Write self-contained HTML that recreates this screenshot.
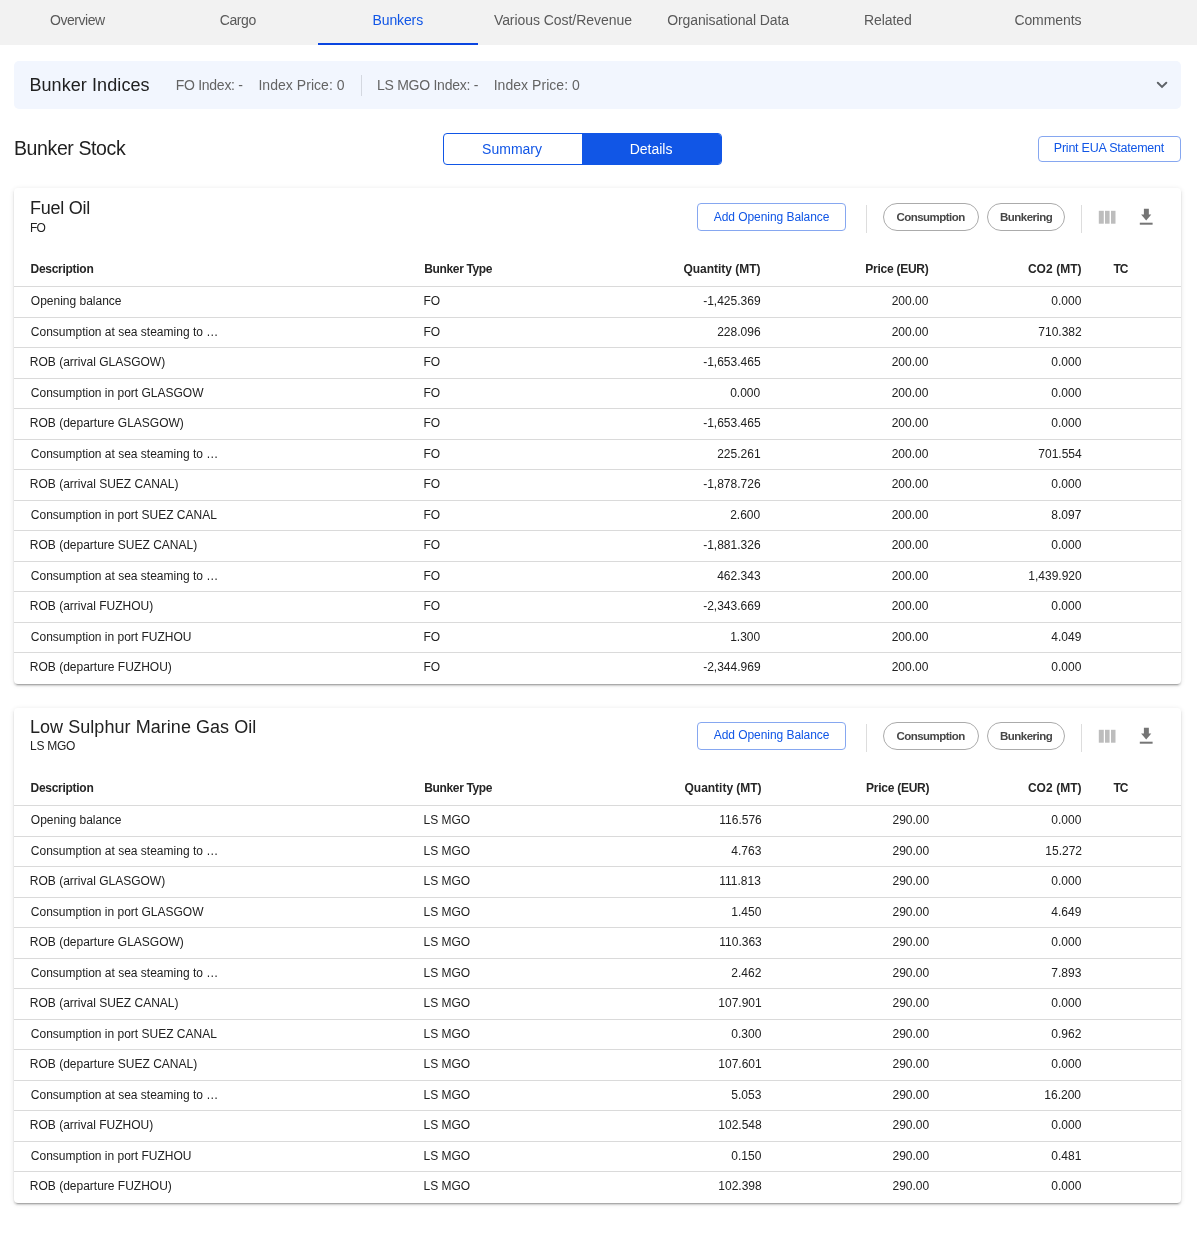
<!DOCTYPE html>
<html><head><meta charset="utf-8"><title>Bunkers</title>
<style>
html,body{margin:0;padding:0;}
body{width:1197px;height:1241px;position:relative;overflow:hidden;background:#fff;font-family:"Liberation Sans", sans-serif;}
</style></head><body><div style="position:absolute;left:0;top:0;width:1197px;height:1241px;will-change:transform;">
<div style="position:absolute;left:0px;top:0px;width:1197px;height:45px;background:#f2f2f2;"></div><div style="position:absolute;left:50.00px;top:10px;font-size:14px;line-height:20px;font-weight:400;color:#595959;white-space:nowrap;letter-spacing:-0.457px;">Overview</div><div style="position:absolute;left:219.80px;top:10px;font-size:14px;line-height:20px;font-weight:400;color:#595959;white-space:nowrap;letter-spacing:-0.425px;">Cargo</div><div style="position:absolute;left:372.50px;top:10px;font-size:14px;line-height:20px;font-weight:400;color:#1156e6;white-space:nowrap;letter-spacing:-0.117px;">Bunkers</div><div style="position:absolute;left:493.90px;top:10px;font-size:14px;line-height:20px;font-weight:400;color:#595959;white-space:nowrap;letter-spacing:-0.053px;">Various Cost/Revenue</div><div style="position:absolute;left:667.20px;top:10px;font-size:14px;line-height:20px;font-weight:400;color:#595959;white-space:nowrap;letter-spacing:-0.100px;">Organisational Data</div><div style="position:absolute;left:864.00px;top:10px;font-size:14px;line-height:20px;font-weight:400;color:#595959;white-space:nowrap;letter-spacing:-0.067px;">Related</div><div style="position:absolute;left:1014.40px;top:10px;font-size:14px;line-height:20px;font-weight:400;color:#595959;white-space:nowrap;letter-spacing:-0.086px;">Comments</div><div style="position:absolute;left:318px;top:43px;width:160px;height:2px;background:#0a45e0;"></div><div style="position:absolute;left:14px;top:61px;width:1167px;height:48px;background:#f2f6fe;border-radius:5px;"></div><div style="position:absolute;left:29.40px;top:73px;font-size:18px;line-height:24px;font-weight:400;color:#212121;white-space:nowrap;letter-spacing:0.085px;">Bunker Indices</div><div style="position:absolute;left:175.70px;top:75px;font-size:14px;line-height:20px;font-weight:400;color:#646464;white-space:nowrap;letter-spacing:-0.270px;">FO Index: -</div><div style="position:absolute;left:258.40px;top:75px;font-size:14px;line-height:20px;font-weight:400;color:#646464;white-space:nowrap;letter-spacing:0.046px;">Index Price: 0</div><div style="position:absolute;left:361px;top:75px;width:1px;height:21px;background:#d4d8e0;"></div><div style="position:absolute;left:377.00px;top:75px;font-size:14px;line-height:20px;font-weight:400;color:#646464;white-space:nowrap;letter-spacing:-0.264px;">LS MGO Index: -</div><div style="position:absolute;left:493.70px;top:75px;font-size:14px;line-height:20px;font-weight:400;color:#646464;white-space:nowrap;letter-spacing:0.038px;">Index Price: 0</div><svg style="position:absolute;left:1150px;top:75px" width="24" height="20" viewBox="0 0 24 20"><path d="M7.8 7.8L12 11.9L16.3 7.8" fill="none" stroke="#5f6368" stroke-width="2" stroke-linecap="round"/></svg><div style="position:absolute;left:14.00px;top:135px;font-size:19.5px;line-height:26px;font-weight:400;color:#212121;white-space:nowrap;letter-spacing:-0.391px;">Bunker Stock</div><div style="position:absolute;left:443px;top:133px;width:277px;height:30px;border:1px solid #1156e6;border-radius:4px;overflow:hidden;background:#fff;"><div style="position:absolute;left:138px;top:0;width:139px;height:30px;background:#1156e6;"></div></div><div style="position:absolute;left:482.10px;top:139px;font-size:14px;line-height:20px;font-weight:400;color:#1156e6;white-space:nowrap;">Summary</div><div style="position:absolute;left:629.70px;top:139px;font-size:14px;line-height:20px;font-weight:400;color:#ffffff;white-space:nowrap;">Details</div><div style="position:absolute;left:1038px;top:136px;width:141px;height:24px;border:1px solid #86a7f0;border-radius:4px;"></div><div style="position:absolute;left:1053.80px;top:139px;font-size:12.5px;line-height:18px;font-weight:400;color:#1156e6;white-space:nowrap;letter-spacing:-0.233px;">Print EUA Statement</div><div style="position:absolute;left:14px;top:188px;width:1167px;height:496px;background:#fff;border-radius:4px;box-shadow:0px 3px 1px -2px rgba(0,0,0,0.2),0px 2px 2px 0px rgba(0,0,0,0.14),0px 1px 5px 0px rgba(0,0,0,0.12);"></div><div style="position:absolute;left:30.00px;top:196px;font-size:18px;line-height:24px;font-weight:400;color:#212121;white-space:nowrap;letter-spacing:-0.243px;">Fuel Oil</div><div style="position:absolute;left:30.00px;top:219px;font-size:12px;line-height:18px;font-weight:400;color:#212121;white-space:nowrap;letter-spacing:-0.900px;">FO</div><div style="position:absolute;left:697px;top:203px;width:147px;height:26px;border:1px solid #86a7f0;border-radius:4px;"></div><div style="position:absolute;left:713.80px;top:208px;font-size:12px;line-height:18px;font-weight:400;color:#1156e6;white-space:nowrap;letter-spacing:-0.061px;">Add Opening Balance</div><div style="position:absolute;left:866px;top:205px;width:1px;height:28px;background:#dddddd;"></div><div style="position:absolute;left:883px;top:203px;width:94px;height:26px;border:1px solid #ababab;border-radius:14px;"></div><div style="position:absolute;left:896.40px;top:209px;font-size:11.5px;line-height:16px;font-weight:700;color:#474747;white-space:nowrap;letter-spacing:-0.520px;">Consumption</div><div style="position:absolute;left:987px;top:203px;width:76px;height:26px;border:1px solid #ababab;border-radius:14px;"></div><div style="position:absolute;left:1000.00px;top:209px;font-size:11.5px;line-height:16px;font-weight:700;color:#474747;white-space:nowrap;letter-spacing:-0.525px;">Bunkering</div><div style="position:absolute;left:1081px;top:205px;width:1px;height:28px;background:#dddddd;"></div><svg style="position:absolute;left:1092px;top:202px" width="32" height="32" viewBox="0 0 32 32"><rect x="6.8" y="8.8" width="5" height="12.9" fill="#bdbdbd"/><rect x="13" y="8.8" width="4.6" height="12.9" fill="#bdbdbd"/><rect x="19" y="8.8" width="4.5" height="12.9" fill="#bdbdbd"/></svg><svg style="position:absolute;left:1130px;top:200px" width="32" height="32" viewBox="0 0 32 32"><path d="M13.9 8.8h4.95v5.6h2.45l-5.1 6.2-5.1-6.2h2.8z" fill="#757575"/><rect x="9.8" y="22.7" width="12.8" height="2" fill="#757575"/></svg><div style="position:absolute;left:30.50px;top:260px;font-size:12px;line-height:18px;font-weight:700;color:#262626;white-space:nowrap;letter-spacing:-0.280px;">Description</div><div style="position:absolute;left:424.30px;top:260px;font-size:12px;line-height:18px;font-weight:700;color:#262626;white-space:nowrap;letter-spacing:-0.360px;">Bunker Type</div><div style="position:absolute;left:683.40px;top:260px;font-size:12px;line-height:18px;font-weight:700;color:#262626;white-space:nowrap;letter-spacing:-0.017px;">Quantity (MT)</div><div style="position:absolute;left:865.30px;top:260px;font-size:12px;line-height:18px;font-weight:700;color:#262626;white-space:nowrap;letter-spacing:-0.260px;">Price (EUR)</div><div style="position:absolute;left:1027.90px;top:260px;font-size:12px;line-height:18px;font-weight:700;color:#262626;white-space:nowrap;letter-spacing:0.057px;">CO2 (MT)</div><div style="position:absolute;left:1113.40px;top:260px;font-size:12px;line-height:18px;font-weight:700;color:#262626;white-space:nowrap;letter-spacing:-1.000px;">TC</div><div style="position:absolute;left:14px;top:286px;width:1167px;height:1px;background:#dadada;"></div><div style="position:absolute;left:30.80px;top:292px;font-size:12px;line-height:18px;font-weight:400;color:#212121;white-space:nowrap;">Opening balance</div><div style="position:absolute;left:423.50px;top:292px;font-size:12px;line-height:18px;font-weight:400;color:#212121;white-space:nowrap;">FO</div><div style="position:absolute;left:703.20px;top:292px;font-size:12px;line-height:18px;font-weight:400;color:#212121;white-space:nowrap;">-1,425.369</div><div style="position:absolute;left:891.70px;top:292px;font-size:12px;line-height:18px;font-weight:400;color:#212121;white-space:nowrap;">200.00</div><div style="position:absolute;left:1051.30px;top:292px;font-size:12px;line-height:18px;font-weight:400;color:#212121;white-space:nowrap;">0.000</div><div style="position:absolute;left:14px;top:317px;width:1167px;height:1px;background:#dadada;"></div><div style="position:absolute;left:30.80px;top:323px;font-size:12px;line-height:18px;font-weight:400;color:#212121;white-space:nowrap;">Consumption at sea steaming to …</div><div style="position:absolute;left:423.50px;top:323px;font-size:12px;line-height:18px;font-weight:400;color:#212121;white-space:nowrap;">FO</div><div style="position:absolute;left:717.20px;top:323px;font-size:12px;line-height:18px;font-weight:400;color:#212121;white-space:nowrap;">228.096</div><div style="position:absolute;left:891.70px;top:323px;font-size:12px;line-height:18px;font-weight:400;color:#212121;white-space:nowrap;">200.00</div><div style="position:absolute;left:1038.30px;top:323px;font-size:12px;line-height:18px;font-weight:400;color:#212121;white-space:nowrap;">710.382</div><div style="position:absolute;left:14px;top:347px;width:1167px;height:1px;background:#dadada;"></div><div style="position:absolute;left:29.80px;top:353px;font-size:12px;line-height:18px;font-weight:400;color:#212121;white-space:nowrap;">ROB (arrival GLASGOW)</div><div style="position:absolute;left:423.50px;top:353px;font-size:12px;line-height:18px;font-weight:400;color:#212121;white-space:nowrap;">FO</div><div style="position:absolute;left:703.20px;top:353px;font-size:12px;line-height:18px;font-weight:400;color:#212121;white-space:nowrap;">-1,653.465</div><div style="position:absolute;left:891.70px;top:353px;font-size:12px;line-height:18px;font-weight:400;color:#212121;white-space:nowrap;">200.00</div><div style="position:absolute;left:1051.30px;top:353px;font-size:12px;line-height:18px;font-weight:400;color:#212121;white-space:nowrap;">0.000</div><div style="position:absolute;left:14px;top:378px;width:1167px;height:1px;background:#dadada;"></div><div style="position:absolute;left:30.80px;top:384px;font-size:12px;line-height:18px;font-weight:400;color:#212121;white-space:nowrap;">Consumption in port GLASGOW</div><div style="position:absolute;left:423.50px;top:384px;font-size:12px;line-height:18px;font-weight:400;color:#212121;white-space:nowrap;">FO</div><div style="position:absolute;left:730.20px;top:384px;font-size:12px;line-height:18px;font-weight:400;color:#212121;white-space:nowrap;">0.000</div><div style="position:absolute;left:891.70px;top:384px;font-size:12px;line-height:18px;font-weight:400;color:#212121;white-space:nowrap;">200.00</div><div style="position:absolute;left:1051.30px;top:384px;font-size:12px;line-height:18px;font-weight:400;color:#212121;white-space:nowrap;">0.000</div><div style="position:absolute;left:14px;top:408px;width:1167px;height:1px;background:#dadada;"></div><div style="position:absolute;left:29.80px;top:414px;font-size:12px;line-height:18px;font-weight:400;color:#212121;white-space:nowrap;">ROB (departure GLASGOW)</div><div style="position:absolute;left:423.50px;top:414px;font-size:12px;line-height:18px;font-weight:400;color:#212121;white-space:nowrap;">FO</div><div style="position:absolute;left:703.20px;top:414px;font-size:12px;line-height:18px;font-weight:400;color:#212121;white-space:nowrap;">-1,653.465</div><div style="position:absolute;left:891.70px;top:414px;font-size:12px;line-height:18px;font-weight:400;color:#212121;white-space:nowrap;">200.00</div><div style="position:absolute;left:1051.30px;top:414px;font-size:12px;line-height:18px;font-weight:400;color:#212121;white-space:nowrap;">0.000</div><div style="position:absolute;left:14px;top:439px;width:1167px;height:1px;background:#dadada;"></div><div style="position:absolute;left:30.80px;top:445px;font-size:12px;line-height:18px;font-weight:400;color:#212121;white-space:nowrap;">Consumption at sea steaming to …</div><div style="position:absolute;left:423.50px;top:445px;font-size:12px;line-height:18px;font-weight:400;color:#212121;white-space:nowrap;">FO</div><div style="position:absolute;left:717.20px;top:445px;font-size:12px;line-height:18px;font-weight:400;color:#212121;white-space:nowrap;">225.261</div><div style="position:absolute;left:891.70px;top:445px;font-size:12px;line-height:18px;font-weight:400;color:#212121;white-space:nowrap;">200.00</div><div style="position:absolute;left:1038.30px;top:445px;font-size:12px;line-height:18px;font-weight:400;color:#212121;white-space:nowrap;">701.554</div><div style="position:absolute;left:14px;top:469px;width:1167px;height:1px;background:#dadada;"></div><div style="position:absolute;left:29.80px;top:475px;font-size:12px;line-height:18px;font-weight:400;color:#212121;white-space:nowrap;">ROB (arrival SUEZ CANAL)</div><div style="position:absolute;left:423.50px;top:475px;font-size:12px;line-height:18px;font-weight:400;color:#212121;white-space:nowrap;">FO</div><div style="position:absolute;left:703.20px;top:475px;font-size:12px;line-height:18px;font-weight:400;color:#212121;white-space:nowrap;">-1,878.726</div><div style="position:absolute;left:891.70px;top:475px;font-size:12px;line-height:18px;font-weight:400;color:#212121;white-space:nowrap;">200.00</div><div style="position:absolute;left:1051.30px;top:475px;font-size:12px;line-height:18px;font-weight:400;color:#212121;white-space:nowrap;">0.000</div><div style="position:absolute;left:14px;top:500px;width:1167px;height:1px;background:#dadada;"></div><div style="position:absolute;left:30.80px;top:506px;font-size:12px;line-height:18px;font-weight:400;color:#212121;white-space:nowrap;">Consumption in port SUEZ CANAL</div><div style="position:absolute;left:423.50px;top:506px;font-size:12px;line-height:18px;font-weight:400;color:#212121;white-space:nowrap;">FO</div><div style="position:absolute;left:730.20px;top:506px;font-size:12px;line-height:18px;font-weight:400;color:#212121;white-space:nowrap;">2.600</div><div style="position:absolute;left:891.70px;top:506px;font-size:12px;line-height:18px;font-weight:400;color:#212121;white-space:nowrap;">200.00</div><div style="position:absolute;left:1051.30px;top:506px;font-size:12px;line-height:18px;font-weight:400;color:#212121;white-space:nowrap;">8.097</div><div style="position:absolute;left:14px;top:530px;width:1167px;height:1px;background:#dadada;"></div><div style="position:absolute;left:29.80px;top:536px;font-size:12px;line-height:18px;font-weight:400;color:#212121;white-space:nowrap;">ROB (departure SUEZ CANAL)</div><div style="position:absolute;left:423.50px;top:536px;font-size:12px;line-height:18px;font-weight:400;color:#212121;white-space:nowrap;">FO</div><div style="position:absolute;left:703.20px;top:536px;font-size:12px;line-height:18px;font-weight:400;color:#212121;white-space:nowrap;">-1,881.326</div><div style="position:absolute;left:891.70px;top:536px;font-size:12px;line-height:18px;font-weight:400;color:#212121;white-space:nowrap;">200.00</div><div style="position:absolute;left:1051.30px;top:536px;font-size:12px;line-height:18px;font-weight:400;color:#212121;white-space:nowrap;">0.000</div><div style="position:absolute;left:14px;top:561px;width:1167px;height:1px;background:#dadada;"></div><div style="position:absolute;left:30.80px;top:567px;font-size:12px;line-height:18px;font-weight:400;color:#212121;white-space:nowrap;">Consumption at sea steaming to …</div><div style="position:absolute;left:423.50px;top:567px;font-size:12px;line-height:18px;font-weight:400;color:#212121;white-space:nowrap;">FO</div><div style="position:absolute;left:717.20px;top:567px;font-size:12px;line-height:18px;font-weight:400;color:#212121;white-space:nowrap;">462.343</div><div style="position:absolute;left:891.70px;top:567px;font-size:12px;line-height:18px;font-weight:400;color:#212121;white-space:nowrap;">200.00</div><div style="position:absolute;left:1028.30px;top:567px;font-size:12px;line-height:18px;font-weight:400;color:#212121;white-space:nowrap;">1,439.920</div><div style="position:absolute;left:14px;top:591px;width:1167px;height:1px;background:#dadada;"></div><div style="position:absolute;left:29.80px;top:597px;font-size:12px;line-height:18px;font-weight:400;color:#212121;white-space:nowrap;">ROB (arrival FUZHOU)</div><div style="position:absolute;left:423.50px;top:597px;font-size:12px;line-height:18px;font-weight:400;color:#212121;white-space:nowrap;">FO</div><div style="position:absolute;left:703.20px;top:597px;font-size:12px;line-height:18px;font-weight:400;color:#212121;white-space:nowrap;">-2,343.669</div><div style="position:absolute;left:891.70px;top:597px;font-size:12px;line-height:18px;font-weight:400;color:#212121;white-space:nowrap;">200.00</div><div style="position:absolute;left:1051.30px;top:597px;font-size:12px;line-height:18px;font-weight:400;color:#212121;white-space:nowrap;">0.000</div><div style="position:absolute;left:14px;top:622px;width:1167px;height:1px;background:#dadada;"></div><div style="position:absolute;left:30.80px;top:628px;font-size:12px;line-height:18px;font-weight:400;color:#212121;white-space:nowrap;">Consumption in port FUZHOU</div><div style="position:absolute;left:423.50px;top:628px;font-size:12px;line-height:18px;font-weight:400;color:#212121;white-space:nowrap;">FO</div><div style="position:absolute;left:730.20px;top:628px;font-size:12px;line-height:18px;font-weight:400;color:#212121;white-space:nowrap;">1.300</div><div style="position:absolute;left:891.70px;top:628px;font-size:12px;line-height:18px;font-weight:400;color:#212121;white-space:nowrap;">200.00</div><div style="position:absolute;left:1051.30px;top:628px;font-size:12px;line-height:18px;font-weight:400;color:#212121;white-space:nowrap;">4.049</div><div style="position:absolute;left:14px;top:652px;width:1167px;height:1px;background:#dadada;"></div><div style="position:absolute;left:29.80px;top:658px;font-size:12px;line-height:18px;font-weight:400;color:#212121;white-space:nowrap;">ROB (departure FUZHOU)</div><div style="position:absolute;left:423.50px;top:658px;font-size:12px;line-height:18px;font-weight:400;color:#212121;white-space:nowrap;">FO</div><div style="position:absolute;left:703.20px;top:658px;font-size:12px;line-height:18px;font-weight:400;color:#212121;white-space:nowrap;">-2,344.969</div><div style="position:absolute;left:891.70px;top:658px;font-size:12px;line-height:18px;font-weight:400;color:#212121;white-space:nowrap;">200.00</div><div style="position:absolute;left:1051.30px;top:658px;font-size:12px;line-height:18px;font-weight:400;color:#212121;white-space:nowrap;">0.000</div><div style="position:absolute;left:14px;top:708px;width:1167px;height:495px;background:#fff;border-radius:4px;box-shadow:0px 3px 1px -2px rgba(0,0,0,0.2),0px 2px 2px 0px rgba(0,0,0,0.14),0px 1px 5px 0px rgba(0,0,0,0.12);"></div><div style="position:absolute;left:30.00px;top:715px;font-size:18px;line-height:24px;font-weight:400;color:#212121;white-space:nowrap;letter-spacing:0.048px;">Low Sulphur Marine Gas Oil</div><div style="position:absolute;left:30.00px;top:737px;font-size:12px;line-height:18px;font-weight:400;color:#212121;white-space:nowrap;letter-spacing:-0.280px;">LS MGO</div><div style="position:absolute;left:697px;top:722px;width:147px;height:26px;border:1px solid #86a7f0;border-radius:4px;"></div><div style="position:absolute;left:713.80px;top:726px;font-size:12px;line-height:18px;font-weight:400;color:#1156e6;white-space:nowrap;letter-spacing:-0.061px;">Add Opening Balance</div><div style="position:absolute;left:866px;top:724px;width:1px;height:28px;background:#dddddd;"></div><div style="position:absolute;left:883px;top:722px;width:94px;height:26px;border:1px solid #ababab;border-radius:14px;"></div><div style="position:absolute;left:896.40px;top:728px;font-size:11.5px;line-height:16px;font-weight:700;color:#474747;white-space:nowrap;letter-spacing:-0.520px;">Consumption</div><div style="position:absolute;left:987px;top:722px;width:76px;height:26px;border:1px solid #ababab;border-radius:14px;"></div><div style="position:absolute;left:1000.00px;top:728px;font-size:11.5px;line-height:16px;font-weight:700;color:#474747;white-space:nowrap;letter-spacing:-0.525px;">Bunkering</div><div style="position:absolute;left:1081px;top:724px;width:1px;height:28px;background:#dddddd;"></div><svg style="position:absolute;left:1092px;top:721px" width="32" height="32" viewBox="0 0 32 32"><rect x="6.8" y="8.8" width="5" height="12.9" fill="#bdbdbd"/><rect x="13" y="8.8" width="4.6" height="12.9" fill="#bdbdbd"/><rect x="19" y="8.8" width="4.5" height="12.9" fill="#bdbdbd"/></svg><svg style="position:absolute;left:1130px;top:719px" width="32" height="32" viewBox="0 0 32 32"><path d="M13.9 8.8h4.95v5.6h2.45l-5.1 6.2-5.1-6.2h2.8z" fill="#757575"/><rect x="9.8" y="22.7" width="12.8" height="2" fill="#757575"/></svg><div style="position:absolute;left:30.50px;top:779px;font-size:12px;line-height:18px;font-weight:700;color:#262626;white-space:nowrap;letter-spacing:-0.280px;">Description</div><div style="position:absolute;left:424.30px;top:779px;font-size:12px;line-height:18px;font-weight:700;color:#262626;white-space:nowrap;letter-spacing:-0.360px;">Bunker Type</div><div style="position:absolute;left:684.50px;top:779px;font-size:12px;line-height:18px;font-weight:700;color:#262626;white-space:nowrap;letter-spacing:-0.017px;">Quantity (MT)</div><div style="position:absolute;left:866.10px;top:779px;font-size:12px;line-height:18px;font-weight:700;color:#262626;white-space:nowrap;letter-spacing:-0.260px;">Price (EUR)</div><div style="position:absolute;left:1027.90px;top:779px;font-size:12px;line-height:18px;font-weight:700;color:#262626;white-space:nowrap;letter-spacing:0.057px;">CO2 (MT)</div><div style="position:absolute;left:1113.40px;top:779px;font-size:12px;line-height:18px;font-weight:700;color:#262626;white-space:nowrap;letter-spacing:-1.000px;">TC</div><div style="position:absolute;left:14px;top:805px;width:1167px;height:1px;background:#dadada;"></div><div style="position:absolute;left:30.80px;top:811px;font-size:12px;line-height:18px;font-weight:400;color:#212121;white-space:nowrap;">Opening balance</div><div style="position:absolute;left:423.50px;top:811px;font-size:12px;line-height:18px;font-weight:400;color:#212121;white-space:nowrap;">LS MGO</div><div style="position:absolute;left:719.30px;top:811px;font-size:12px;line-height:18px;font-weight:400;color:#212121;white-space:nowrap;">116.576</div><div style="position:absolute;left:892.50px;top:811px;font-size:12px;line-height:18px;font-weight:400;color:#212121;white-space:nowrap;">290.00</div><div style="position:absolute;left:1051.30px;top:811px;font-size:12px;line-height:18px;font-weight:400;color:#212121;white-space:nowrap;">0.000</div><div style="position:absolute;left:14px;top:836px;width:1167px;height:1px;background:#dadada;"></div><div style="position:absolute;left:30.80px;top:842px;font-size:12px;line-height:18px;font-weight:400;color:#212121;white-space:nowrap;">Consumption at sea steaming to …</div><div style="position:absolute;left:423.50px;top:842px;font-size:12px;line-height:18px;font-weight:400;color:#212121;white-space:nowrap;">LS MGO</div><div style="position:absolute;left:731.30px;top:842px;font-size:12px;line-height:18px;font-weight:400;color:#212121;white-space:nowrap;">4.763</div><div style="position:absolute;left:892.50px;top:842px;font-size:12px;line-height:18px;font-weight:400;color:#212121;white-space:nowrap;">290.00</div><div style="position:absolute;left:1045.30px;top:842px;font-size:12px;line-height:18px;font-weight:400;color:#212121;white-space:nowrap;">15.272</div><div style="position:absolute;left:14px;top:866px;width:1167px;height:1px;background:#dadada;"></div><div style="position:absolute;left:29.80px;top:872px;font-size:12px;line-height:18px;font-weight:400;color:#212121;white-space:nowrap;">ROB (arrival GLASGOW)</div><div style="position:absolute;left:423.50px;top:872px;font-size:12px;line-height:18px;font-weight:400;color:#212121;white-space:nowrap;">LS MGO</div><div style="position:absolute;left:719.30px;top:872px;font-size:12px;line-height:18px;font-weight:400;color:#212121;white-space:nowrap;">111.813</div><div style="position:absolute;left:892.50px;top:872px;font-size:12px;line-height:18px;font-weight:400;color:#212121;white-space:nowrap;">290.00</div><div style="position:absolute;left:1051.30px;top:872px;font-size:12px;line-height:18px;font-weight:400;color:#212121;white-space:nowrap;">0.000</div><div style="position:absolute;left:14px;top:897px;width:1167px;height:1px;background:#dadada;"></div><div style="position:absolute;left:30.80px;top:903px;font-size:12px;line-height:18px;font-weight:400;color:#212121;white-space:nowrap;">Consumption in port GLASGOW</div><div style="position:absolute;left:423.50px;top:903px;font-size:12px;line-height:18px;font-weight:400;color:#212121;white-space:nowrap;">LS MGO</div><div style="position:absolute;left:731.30px;top:903px;font-size:12px;line-height:18px;font-weight:400;color:#212121;white-space:nowrap;">1.450</div><div style="position:absolute;left:892.50px;top:903px;font-size:12px;line-height:18px;font-weight:400;color:#212121;white-space:nowrap;">290.00</div><div style="position:absolute;left:1051.30px;top:903px;font-size:12px;line-height:18px;font-weight:400;color:#212121;white-space:nowrap;">4.649</div><div style="position:absolute;left:14px;top:927px;width:1167px;height:1px;background:#dadada;"></div><div style="position:absolute;left:29.80px;top:933px;font-size:12px;line-height:18px;font-weight:400;color:#212121;white-space:nowrap;">ROB (departure GLASGOW)</div><div style="position:absolute;left:423.50px;top:933px;font-size:12px;line-height:18px;font-weight:400;color:#212121;white-space:nowrap;">LS MGO</div><div style="position:absolute;left:719.30px;top:933px;font-size:12px;line-height:18px;font-weight:400;color:#212121;white-space:nowrap;">110.363</div><div style="position:absolute;left:892.50px;top:933px;font-size:12px;line-height:18px;font-weight:400;color:#212121;white-space:nowrap;">290.00</div><div style="position:absolute;left:1051.30px;top:933px;font-size:12px;line-height:18px;font-weight:400;color:#212121;white-space:nowrap;">0.000</div><div style="position:absolute;left:14px;top:958px;width:1167px;height:1px;background:#dadada;"></div><div style="position:absolute;left:30.80px;top:964px;font-size:12px;line-height:18px;font-weight:400;color:#212121;white-space:nowrap;">Consumption at sea steaming to …</div><div style="position:absolute;left:423.50px;top:964px;font-size:12px;line-height:18px;font-weight:400;color:#212121;white-space:nowrap;">LS MGO</div><div style="position:absolute;left:731.30px;top:964px;font-size:12px;line-height:18px;font-weight:400;color:#212121;white-space:nowrap;">2.462</div><div style="position:absolute;left:892.50px;top:964px;font-size:12px;line-height:18px;font-weight:400;color:#212121;white-space:nowrap;">290.00</div><div style="position:absolute;left:1051.30px;top:964px;font-size:12px;line-height:18px;font-weight:400;color:#212121;white-space:nowrap;">7.893</div><div style="position:absolute;left:14px;top:988px;width:1167px;height:1px;background:#dadada;"></div><div style="position:absolute;left:29.80px;top:994px;font-size:12px;line-height:18px;font-weight:400;color:#212121;white-space:nowrap;">ROB (arrival SUEZ CANAL)</div><div style="position:absolute;left:423.50px;top:994px;font-size:12px;line-height:18px;font-weight:400;color:#212121;white-space:nowrap;">LS MGO</div><div style="position:absolute;left:718.30px;top:994px;font-size:12px;line-height:18px;font-weight:400;color:#212121;white-space:nowrap;">107.901</div><div style="position:absolute;left:892.50px;top:994px;font-size:12px;line-height:18px;font-weight:400;color:#212121;white-space:nowrap;">290.00</div><div style="position:absolute;left:1051.30px;top:994px;font-size:12px;line-height:18px;font-weight:400;color:#212121;white-space:nowrap;">0.000</div><div style="position:absolute;left:14px;top:1019px;width:1167px;height:1px;background:#dadada;"></div><div style="position:absolute;left:30.80px;top:1025px;font-size:12px;line-height:18px;font-weight:400;color:#212121;white-space:nowrap;">Consumption in port SUEZ CANAL</div><div style="position:absolute;left:423.50px;top:1025px;font-size:12px;line-height:18px;font-weight:400;color:#212121;white-space:nowrap;">LS MGO</div><div style="position:absolute;left:731.30px;top:1025px;font-size:12px;line-height:18px;font-weight:400;color:#212121;white-space:nowrap;">0.300</div><div style="position:absolute;left:892.50px;top:1025px;font-size:12px;line-height:18px;font-weight:400;color:#212121;white-space:nowrap;">290.00</div><div style="position:absolute;left:1051.30px;top:1025px;font-size:12px;line-height:18px;font-weight:400;color:#212121;white-space:nowrap;">0.962</div><div style="position:absolute;left:14px;top:1049px;width:1167px;height:1px;background:#dadada;"></div><div style="position:absolute;left:29.80px;top:1055px;font-size:12px;line-height:18px;font-weight:400;color:#212121;white-space:nowrap;">ROB (departure SUEZ CANAL)</div><div style="position:absolute;left:423.50px;top:1055px;font-size:12px;line-height:18px;font-weight:400;color:#212121;white-space:nowrap;">LS MGO</div><div style="position:absolute;left:718.30px;top:1055px;font-size:12px;line-height:18px;font-weight:400;color:#212121;white-space:nowrap;">107.601</div><div style="position:absolute;left:892.50px;top:1055px;font-size:12px;line-height:18px;font-weight:400;color:#212121;white-space:nowrap;">290.00</div><div style="position:absolute;left:1051.30px;top:1055px;font-size:12px;line-height:18px;font-weight:400;color:#212121;white-space:nowrap;">0.000</div><div style="position:absolute;left:14px;top:1080px;width:1167px;height:1px;background:#dadada;"></div><div style="position:absolute;left:30.80px;top:1086px;font-size:12px;line-height:18px;font-weight:400;color:#212121;white-space:nowrap;">Consumption at sea steaming to …</div><div style="position:absolute;left:423.50px;top:1086px;font-size:12px;line-height:18px;font-weight:400;color:#212121;white-space:nowrap;">LS MGO</div><div style="position:absolute;left:731.30px;top:1086px;font-size:12px;line-height:18px;font-weight:400;color:#212121;white-space:nowrap;">5.053</div><div style="position:absolute;left:892.50px;top:1086px;font-size:12px;line-height:18px;font-weight:400;color:#212121;white-space:nowrap;">290.00</div><div style="position:absolute;left:1044.30px;top:1086px;font-size:12px;line-height:18px;font-weight:400;color:#212121;white-space:nowrap;">16.200</div><div style="position:absolute;left:14px;top:1110px;width:1167px;height:1px;background:#dadada;"></div><div style="position:absolute;left:29.80px;top:1116px;font-size:12px;line-height:18px;font-weight:400;color:#212121;white-space:nowrap;">ROB (arrival FUZHOU)</div><div style="position:absolute;left:423.50px;top:1116px;font-size:12px;line-height:18px;font-weight:400;color:#212121;white-space:nowrap;">LS MGO</div><div style="position:absolute;left:718.30px;top:1116px;font-size:12px;line-height:18px;font-weight:400;color:#212121;white-space:nowrap;">102.548</div><div style="position:absolute;left:892.50px;top:1116px;font-size:12px;line-height:18px;font-weight:400;color:#212121;white-space:nowrap;">290.00</div><div style="position:absolute;left:1051.30px;top:1116px;font-size:12px;line-height:18px;font-weight:400;color:#212121;white-space:nowrap;">0.000</div><div style="position:absolute;left:14px;top:1141px;width:1167px;height:1px;background:#dadada;"></div><div style="position:absolute;left:30.80px;top:1147px;font-size:12px;line-height:18px;font-weight:400;color:#212121;white-space:nowrap;">Consumption in port FUZHOU</div><div style="position:absolute;left:423.50px;top:1147px;font-size:12px;line-height:18px;font-weight:400;color:#212121;white-space:nowrap;">LS MGO</div><div style="position:absolute;left:731.30px;top:1147px;font-size:12px;line-height:18px;font-weight:400;color:#212121;white-space:nowrap;">0.150</div><div style="position:absolute;left:892.50px;top:1147px;font-size:12px;line-height:18px;font-weight:400;color:#212121;white-space:nowrap;">290.00</div><div style="position:absolute;left:1051.30px;top:1147px;font-size:12px;line-height:18px;font-weight:400;color:#212121;white-space:nowrap;">0.481</div><div style="position:absolute;left:14px;top:1171px;width:1167px;height:1px;background:#dadada;"></div><div style="position:absolute;left:29.80px;top:1177px;font-size:12px;line-height:18px;font-weight:400;color:#212121;white-space:nowrap;">ROB (departure FUZHOU)</div><div style="position:absolute;left:423.50px;top:1177px;font-size:12px;line-height:18px;font-weight:400;color:#212121;white-space:nowrap;">LS MGO</div><div style="position:absolute;left:718.30px;top:1177px;font-size:12px;line-height:18px;font-weight:400;color:#212121;white-space:nowrap;">102.398</div><div style="position:absolute;left:892.50px;top:1177px;font-size:12px;line-height:18px;font-weight:400;color:#212121;white-space:nowrap;">290.00</div><div style="position:absolute;left:1051.30px;top:1177px;font-size:12px;line-height:18px;font-weight:400;color:#212121;white-space:nowrap;">0.000</div>
</div></body></html>
